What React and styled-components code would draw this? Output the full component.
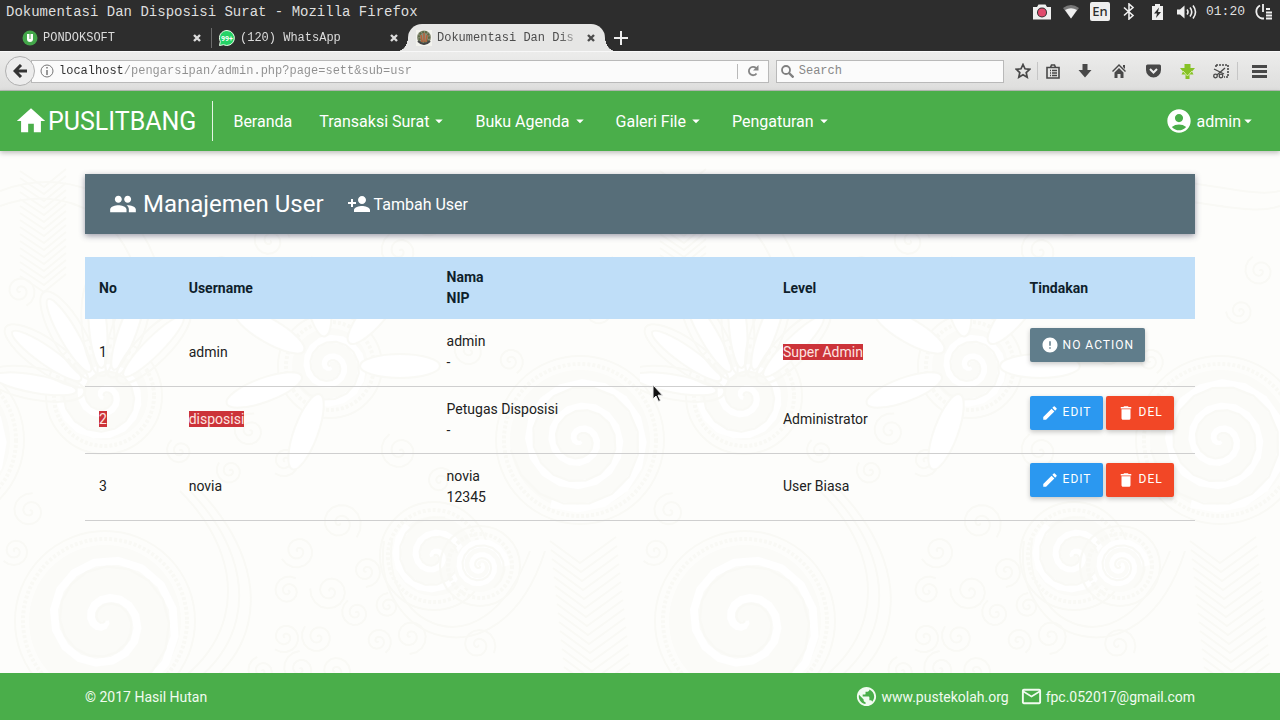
import styled, { createGlobalStyle } from "styled-components";
import {
  MdHome,
  MdArrowDropDown,
  MdAccountCircle,
  MdPeople,
  MdPersonAdd,
  MdError,
  MdEdit,
  MdDelete,
  MdPublic,
  MdMailOutline,
} from "react-icons/md";

const GlobalStyle = createGlobalStyle`
  * { box-sizing: border-box; }
  body {
    margin: 0;
    font-family: Roboto, sans-serif;
    font-size: 14px;
    color: #212121;
    background: #fdfdfb;
  }
  a { color: inherit; text-decoration: none; }
  button { font: inherit; color: inherit; border: 0; padding: 0; background: none; cursor: pointer; }
  svg { display: block; flex: none; }
`;

const mono = `"Liberation Mono", monospace`;

const Screen = styled.div`
  display: flex;
  flex-direction: column;
  min-height: 100vh;
`;

/* ---------- desktop + browser ---------- */

const TitleBar = styled.header`
  display: flex;
  align-items: center;
  justify-content: space-between;
  height: 23px;
  padding: 0 6px;
  background: #2d2d2d;
  color: #dfdfdf;
  font-family: ${mono};
  font-size: 14px;
`;

const Tray = styled.div`
  display: flex;
  align-items: center;
  gap: 9px;
`;

const TrayItem = styled.span`
  display: flex;
  justify-content: center;
  width: 20px;
`;

const Lang = styled.span`
  width: 20px;
  height: 19px;
  border-radius: 2px;
  background: #efefef;
  color: #2d2d2d;
  font: 500 13px/19px "Noto Sans", sans-serif;
  text-align: center;
`;

const Clock = styled.time`
  font-size: 13px;
`;

const TabBar = styled.nav`
  display: flex;
  align-items: flex-end;
  height: 28px;
  padding-left: 14px;
  background: #2d2d2d;
`;

const Tab = styled.div`
  position: relative;
  display: flex;
  align-items: center;
  gap: 5px;
  width: 197px;
  height: 27px;
  padding: 0 10px 0 8px;
  font-family: ${mono};
  font-size: 12px;
  color: ${(p) => (p.$active ? "#4c4c4c" : "#dcdcdc")};
  background: ${(p) => (p.$active ? "#e6e6e5" : "none")};
  border-radius: 14px 14px 0 0;

  &::before,
  &::after {
    content: "";
    display: ${(p) => (p.$active ? "block" : "none")};
    position: absolute;
    bottom: 0;
    width: 10px;
    height: 14px;
  }
  &::before {
    right: 100%;
    background: radial-gradient(10px 14px at 0 0, transparent 98%, #e6e6e5);
  }
  &::after {
    left: 100%;
    background: radial-gradient(10px 14px at 100% 0, transparent 98%, #e6e6e5);
  }
`;

const TabTitle = styled.span`
  flex: 1;
  overflow: hidden;
  white-space: nowrap;
  mask-image: linear-gradient(90deg, #000 84%, rgba(0, 0, 0, 0.1));
`;

const TabSplit = styled.span`
  width: 1px;
  height: 20px;
  margin: 0 -1px 3px 0;
  background: #6c6c6c;
`;

const NewTab = styled.button`
  display: flex;
  align-items: center;
  height: 27px;
  margin-left: 9px;
`;

const Toolbar = styled.div`
  display: flex;
  align-items: center;
  height: 40px;
  padding-left: 5px;
  background: linear-gradient(#ececeb, #dededd);
  border-top: 1px solid #f8f8f8;
  border-bottom: 1px solid #b7bdb6;
`;

const Back = styled.button`
  display: grid;
  place-items: center;
  width: 30px;
  height: 30px;
  border: 1px solid #b0b0b0;
  border-radius: 50%;
  background: #ececec;
  z-index: 1;
`;

const Field = styled.label`
  display: flex;
  align-items: center;
  flex: ${(p) => p.$grow} 1 0;
  height: 23px;
  margin-left: ${(p) => (p.$joined ? "-4px" : "7px")};
  padding-left: ${(p) => (p.$joined ? "8px" : "4px")};
  border: 1px solid #b9b9b9;
  background: #fbfbfb;
`;

const FieldInput = styled.input`
  flex: 1;
  min-width: 0;
  height: 21px;
  padding: 0 5px;
  border: 0;
  outline: 0;
  background: none;
  font-family: ${mono};
  font-size: 12px;
  color: #777;
  &::placeholder {
    color: #888;
    opacity: 1;
  }
`;

/* host name is darker than the path */
const UrlInput = styled(FieldInput)`
  padding: 0;
  margin-left: 5px;
  background: linear-gradient(90deg, #2e2e2e 9ch, #8f8f8f 9ch);
  -webkit-background-clip: text;
  background-clip: text;
  -webkit-text-fill-color: transparent;
`;

const Reload = styled.button`
  display: grid;
  place-items: center;
  width: 31px;
  height: 15px;
  border-left: 1px solid #b9b9b9;
`;

const Tools = styled.div`
  display: flex;
  margin-left: 4px;
`;

const Tool = styled.button`
  display: grid;
  place-items: center;
  width: ${(p) => p.$w || 34}px;
  height: 18px;
  border-right: ${(p) => (p.$split ? "1px solid #c6c6c6" : "0")};
  color: #484848;
`;

/* ---------- site ---------- */

const Navbar = styled.nav`
  display: flex;
  align-items: center;
  height: 60px;
  padding: 0 23px 0 14px;
  background: #4aae4a;
  color: #fff;
  font-size: 16px;
  box-shadow: 0 2px 5px rgba(0, 0, 0, 0.25);
  z-index: 1;
`;

const Brand = styled.a`
  display: flex;
  align-items: center;
  height: 40px;
  padding-right: 16px;
  margin-right: 7px;
  border-right: 1px solid #e5f5e5;
  font-size: 25px;
`;

const NavLink = styled.a`
  display: flex;
  align-items: center;
  padding: 0 14px 0 13px;
  svg {
    margin-left: 1px;
  }
`;

const Account = styled.a`
  display: flex;
  align-items: center;
  margin-left: auto;
  svg:first-child {
    margin-right: 4px;
  }
  svg:last-child {
    margin-left: -2px;
  }
`;

const Main = styled.main`
  position: relative;
  flex: 1;
  padding: 23px 85px;
  overflow: hidden;
`;

const Backdrop = styled.svg`
  position: absolute;
  top: 0;
  left: 0;
  width: 100%;
  height: 100%;
`;

const Heading = styled.div`
  position: relative;
  display: flex;
  align-items: center;
  height: 60px;
  margin-bottom: 23px;
  padding-left: 24px;
  background: #576e79;
  color: #fff;
  box-shadow: 0 2px 6px rgba(40, 40, 70, 0.45);
`;

const HeadTitle = styled.h1`
  display: flex;
  align-items: center;
  gap: 6px;
  margin: 0;
  font-size: 24px;
  font-weight: 400;
`;

const AddLink = styled.a`
  display: flex;
  align-items: center;
  gap: 3px;
  margin-left: 23px;
  font-size: 16px;
`;

const Table = styled.table`
  position: relative;
  width: 100%;
  table-layout: fixed;
  border-collapse: collapse;
  line-height: 21px;
`;

const HeadRow = styled.tr`
  height: 62px;
  background: #bfdef8;
`;

const Row = styled.tr`
  height: 67px;
  border-bottom: 1px solid #cfcfcf;
`;

const Th = styled.th`
  width: ${(p) => p.$w};
  padding: 0 14px;
  text-align: left;
  font-weight: 700;
  color: #0f1f2c;
`;

const Td = styled.td`
  padding: 0 14px;
`;

const ActionTd = styled(Td)`
  padding-top: 9px;
  vertical-align: top;
`;

const Actions = styled.div`
  display: flex;
  gap: 3px;
`;

const Selected = styled.mark`
  background: #cc3339;
  color: #fde3e0;
`;

const Btn = styled.button`
  display: flex;
  align-items: center;
  gap: 4px;
  height: 34px;
  padding: 0 11px;
  border-radius: 2px;
  background: ${(p) => p.$bg};
  color: #fff;
  font-size: 12px;
  letter-spacing: 1px;
  box-shadow: 0 2px 5px rgba(0, 0, 0, 0.22);
`;

const Footer = styled.footer`
  display: flex;
  align-items: center;
  height: 47px;
  padding: 0 85px;
  background: #4aae4a;
  color: #f1fbf0;
`;

const FootLink = styled.a`
  display: flex;
  align-items: center;
  gap: 3px;
  margin-left: ${(p) => (p.$first ? "auto" : "11px")};
`;

const Pointer = styled.svg`
  position: absolute;
  left: 652px;
  top: 384px;
  z-index: 2;
`;

/* ---------- drawings ---------- */

const spiral = (cx, cy, r, turns, start = 0) => {
  let d = "";
  const steps = turns * 16;
  for (let i = 0; i <= steps; i++) {
    const a = start + (i / 16) * Math.PI * 2;
    const q = (r * i) / steps;
    d += `${i ? "L" : "M"}${(cx + q * Math.cos(a)).toFixed(1)} ${(cy + q * Math.sin(a)).toFixed(1)}`;
  }
  return d;
};

const bigSpirals = [
  [105, 470, 76, 2, 1],
  [580, 289, 70, 3, 2],
  [-60, 289, 70, 3, 2],
  [434, 405, 40, 2, 4],
  [480, 415, 26, 2, 0],
  [104, 245, 44, 2, 3],
  [330, 215, 38, 2, 2],
];

const smallSpirals = [
  [298, 400, 18], [340, 372, 22], [366, 420, 16], [288, 440, 15], [330, 440, 20],
  [285, 486, 16], [318, 486, 17], [356, 462, 15], [378, 490, 14], [410, 485, 18],
  [262, 520, 15], [300, 518, 18], [335, 520, 18], [478, 494, 18], [388, 455, 13],
  [230, 60, 18], [270, 90, 20], [220, 120, 16], [520, 150, 20], [480, 130, 16],
  [250, 280, 18], [285, 310, 16], [230, 320, 14], [400, 300, 20], [440, 330, 15],
  [180, 300, 14], [470, 200, 18], [510, 210, 14], [400, 100, 20], [430, 70, 16],
  [20, 140, 16], [30, 360, 18], [15, 400, 15], [620, 120, 16], [600, 160, 14],
];

const petals = [-80, -55, -30, -5, 20, 45];

const Pattern = () => (
  <Backdrop aria-hidden="true">
    <defs>
      <pattern id="batik" width="640" height="560" patternUnits="userSpaceOnUse">
        <g fill="none" stroke="#f9f9f5" strokeWidth="2">
          {bigSpirals.map(([x, y, r, t, s]) => (
            <g key={`${x}-${y}`}>
              <circle cx={x} cy={y} r={r + 14} />
              <circle cx={x} cy={y} r={r + 6} strokeDasharray="3 2" strokeWidth="4" />
              <circle cx={x} cy={y} r={r} fill="#fbfbf8" stroke="none" />
              <path d={spiral(x, y, r, t, s)} stroke="#fff" strokeWidth="8" />
              <path d={spiral(x, y, r, t, s + 1)} />
            </g>
          ))}
          {smallSpirals.map(([x, y, r]) => (
            <path key={`${x}-${y}`} d={spiral(x, y, r, 2, x)} />
          ))}
          {petals.map((a) => (
            <g key={a}>
              <ellipse cx="104" cy="175" rx="16" ry="50" transform={`rotate(${a} 104 245)`} />
              <ellipse cx="104" cy="175" rx="9" ry="42" fill="#fff" transform={`rotate(${a} 104 245)`} />
              <ellipse cx="330" cy="145" rx="12" ry="40" fill="#fff" transform={`rotate(${a * 2} 330 215)`} />
            </g>
          ))}
          <path d="M180 340C260 420 240 520 120 560M190 340C272 425 250 525 135 560M200 340C285 430 260 530 150 560M392 390C380 470 480 530 530 400M384 390C370 490 500 540 545 400M0 40C80 10 150 60 160 130M0 55C70 30 130 70 140 140M440 40C520 10 600 50 640 40M440 55C520 30 600 70 640 55" />
          {[0, 1, 2, 3, 4, 5, 6, 7, 8, 9, 10, 11, 12, 13, 14, 15].map((i) => (
            <path key={i} d={`M${550 + i} ${390 + i * 9}l30 22l36 -26M20 ${20 + i * 7}l24 16l22 -18`} />
          ))}
        </g>
      </pattern>
    </defs>
    <rect width="100%" height="100%" fill="url(#batik)" />
  </Backdrop>
);

const Close = () => (
  <svg width="8" height="8" viewBox="0 0 8 8" stroke="currentColor" strokeWidth="2.4">
    <path d="M1 1l6 6M7 1L1 7" />
  </svg>
);

const Caret = () => <MdArrowDropDown size={18} />;

const columns = [
  { label: "No", w: "8%" },
  { label: "Username", w: "23%" },
  { label: "Nama", sub: "NIP", w: "30%" },
  { label: "Level", w: "22%" },
  { label: "Tindakan", w: "16%" },
];

const users = [
  { no: 1, username: "admin", nama: "admin", nip: "-", level: "Super Admin", marked: ["level"], locked: true },
  { no: 2, username: "disposisi", nama: "Petugas Disposisi", nip: "-", level: "Administrator", marked: ["no", "username"] },
  { no: 3, username: "novia", nama: "novia", nip: "12345", level: "User Biasa", marked: [] },
];

const menus = ["Transaksi Surat", "Buku Agenda", "Galeri File", "Pengaturan"];

const Value = ({ user, field }) =>
  user.marked.includes(field) ? <Selected>{user[field]}</Selected> : user[field];

const Desktop = () => (
  <TitleBar>
    <span>Dokumentasi Dan Disposisi Surat - Mozilla Firefox</span>
    <Tray>
      <TrayItem>
        <svg width="20" height="16" viewBox="0 0 20 16">
          <path d="M1 3h4l1.500-2.500h7L15 3h4v12.500H1z" fill="#efefef" />
          <circle cx="10" cy="8.500" r="5" fill="#2d2d2d" />
          <circle cx="10" cy="8.500" r="4" fill="#e04a6c" />
        </svg>
      </TrayItem>
      <TrayItem>
        <svg width="18" height="15" viewBox="0 0 18 15">
          <path d="M1 4Q9-2 17 4L9 14.500z" fill="#777" />
          <path d="M3 6Q9 2.500 15 6L9 14.500z" fill="#efefef" />
        </svg>
      </TrayItem>
      <Lang>En</Lang>
      <TrayItem>
        <svg width="12" height="17" viewBox="0 0 12 17" fill="none" stroke="#efefef" strokeWidth="1.600">
          <path d="M1 4.500l9 8-4 3.500V1l4 3.500-9 8" />
        </svg>
      </TrayItem>
      <TrayItem>
        <svg width="13" height="16" viewBox="0 0 13 16">
          <path d="M1 2h3V0h5v2h3v14H1z" fill="#efefef" />
          <path d="M8 3.500L3 9.500h3L5 14l5-6H7z" fill="#2d2d2d" />
        </svg>
      </TrayItem>
      <TrayItem>
        <svg width="20" height="14" viewBox="0 0 20 14">
          <path d="M0 4.500h3l4.500-4v13L3 9.500H0z" fill="#efefef" />
          <path d="M10 4.500q2 2.500 0 5M13 2.500q3.500 4.500 0 9M16 .5q5 6.500 0 13" fill="none" stroke="#efefef" strokeWidth="1.600" />
        </svg>
      </TrayItem>
      <Clock>01:20</Clock>
      <TrayItem>
        <svg width="18" height="16" viewBox="0 0 18 16" fill="none" stroke="#efefef" strokeWidth="1.800">
          <path d="M5 1.500a7 7 0 0 0 2 13h2M8 0v8M11 5h4M11 8.500h6M11 11.500h6M11 14.500h6" />
        </svg>
      </TrayItem>
    </Tray>
  </TitleBar>
);

const Tabs = () => (
  <TabBar>
    <Tab>
      <svg width="16" height="16" viewBox="0 0 16 16">
        <circle cx="8" cy="8" r="7.500" fill="#43a64a" />
        <path d="M5 4h6v5a3 3 0 0 1-6 0z" fill="#fff" />
        <path d="M8 4v5" stroke="#43a64a" />
      </svg>
      <TabTitle>PONDOKSOFT</TabTitle>
      <button aria-label="Tutup tab"><Close /></button>
    </Tab>
    <TabSplit />
    <Tab>
      <svg width="16" height="16" viewBox="0 0 16 16">
        <path d="M8 .500a7.500 7.500 0 1 1-3.500 14.200L.5 15.500l.8-4A7.500 7.500 0 0 1 8 .500z" fill="#25d366" stroke="#e8ffe8" />
        <text x="8" y="11" fontSize="7" fontWeight="700" fontFamily="Roboto" fill="#fff" textAnchor="middle">99+</text>
      </svg>
      <TabTitle>(120) WhatsApp</TabTitle>
      <button aria-label="Tutup tab"><Close /></button>
    </Tab>
    <Tab $active>
      <svg width="16" height="16" viewBox="0 0 16 16">
        <path d="M0 0h16v16H0z" fill="#f3f3ee" />
        <circle cx="8" cy="7.500" r="7" fill="#8b8f7a" />
        <circle cx="8" cy="7" r="5" fill="none" stroke="#5d6a45" strokeWidth="2" strokeDasharray="2 1" />
        <path d="M8 3v9M5 5l1 7M11 5l-1 7" stroke="#b5603a" strokeWidth="1.500" />
        <path d="M2 11q6 6 12 0" fill="none" stroke="#444" strokeWidth="2" />
      </svg>
      <TabTitle>Dokumentasi Dan Dis</TabTitle>
      <button aria-label="Tutup tab"><Close /></button>
    </Tab>
    <NewTab aria-label="Tab baru">
      <svg width="14" height="14" viewBox="0 0 14 14" stroke="#eee" strokeWidth="2">
        <path d="M7 0v14M0 7h14" />
      </svg>
    </NewTab>
  </TabBar>
);

const BrowserBar = () => (
  <Toolbar>
    <Back aria-label="Kembali">
      <svg width="15" height="14" viewBox="0 0 15 14" fill="none" stroke="#333" strokeWidth="3">
        <path d="M14 7H3M8 1L2 7l6 6" />
      </svg>
    </Back>
    <Field $grow={740} $joined>
      <svg width="14" height="14" viewBox="0 0 14 14" fill="none" stroke="#777">
        <circle cx="7" cy="7" r="6" />
        <path d="M7 3v1.500M7 6v5" strokeWidth="1.500" />
      </svg>
      <UrlInput aria-label="Alamat" defaultValue="localhost/pengarsipan/admin.php?page=sett&sub=usr" />
      <Reload aria-label="Muat ulang">
        <svg width="12" height="12" viewBox="0 0 12 12" fill="none" stroke="#858585" strokeWidth="1.800">
          <path d="M9.500 8.500A4.200 4.200 0 1 1 9 3" />
          <path d="M11.500 0v5.500H6z" fill="#858585" stroke="none" />
        </svg>
      </Reload>
    </Field>
    <Field $grow={226}>
      <svg width="13" height="13" viewBox="0 0 13 13" fill="none" stroke="#808080" strokeWidth="1.800">
        <circle cx="5" cy="5" r="4" />
        <path d="M8 8l4.500 4.500" strokeWidth="2.400" />
      </svg>
      <FieldInput aria-label="Cari" placeholder="Search" />
    </Field>
    <Tools>
      <Tool $w={30} $split aria-label="Markah">
        <svg width="16" height="16" viewBox="0 0 16 16" fill="none" stroke="currentColor" strokeWidth="1.700">
          <path d="M8 1.500l2 4.300 4.700.5-3.500 3.200 1 4.700L8 11.800l-4.200 2.400 1-4.700L1.300 6.300l4.700-.5z" />
        </svg>
      </Tool>
      <Tool $w={30} aria-label="Daftar markah">
        <svg width="14" height="15" viewBox="0 0 14 15" fill="none" stroke="currentColor" strokeWidth="1.600">
          <path d="M1 3.500h12V14H1zM4 6.500h1M6 6.500h5M4 9h1M6 9h5M4 11.500h1M6 11.500h5" />
          <path d="M4.500 3.500l1-2.500h3l1 2.500" />
        </svg>
      </Tool>
      <Tool aria-label="Unduhan">
        <svg width="14" height="14" viewBox="0 0 14 14" fill="currentColor">
          <path d="M4.500 0h5v6h4L7 13.500.500 6h4z" />
        </svg>
      </Tool>
      <Tool aria-label="Beranda peramban">
        <svg width="14" height="14" viewBox="0 0 14 14" fill="currentColor">
          <path d="M7 0l7 7-1 1-6-6-6 6-1-1zM11 1h2v4l-2-2zM7 4l4.500 4.500V14h-3v-4h-3v4h-3V8.500z" />
        </svg>
      </Tool>
      <Tool aria-label="Pocket">
        <svg width="15" height="14" viewBox="0 0 15 14">
          <path d="M1.500.500h12a1.500 1.500 0 0 1 1.500 1.500v4a7.500 7.500 0 0 1-15 0V2A1.500 1.500 0 0 1 1.500.500z" fill="#484848" />
          <path d="M4 5l3.500 3.500L11 5" fill="none" stroke="#eee" strokeWidth="2" />
        </svg>
      </Tool>
      <Tool aria-label="Pengunduh">
        <svg width="15" height="15" viewBox="0 0 15 15" fill="#86c226">
          <path d="M4.500 0h6v4H15l-3 3.500 1.500 3H9.500V15h-4v-4.500h-4l1.500-3L0 4h4.500z" />
          <path d="M3 7l4.500 5L12 7" fill="none" stroke="#d9f0a8" />
        </svg>
      </Tool>
      <Tool $split aria-label="Tangkapan layar">
        <svg width="16" height="15" viewBox="0 0 16 15" fill="none" stroke="currentColor" strokeWidth="1.300">
          <path d="M3 1h12v12h-4M3 1v3" strokeWidth="1.600" strokeDasharray="2 1" />
          <path d="M1 5l10 5M12 4L4 11" />
          <circle cx="2.500" cy="12" r="1.800" />
          <circle cx="8" cy="12" r="1.800" />
        </svg>
      </Tool>
      <Tool $w={42} aria-label="Menu">
        <svg width="15" height="13" viewBox="0 0 15 13" fill="currentColor">
          <path d="M0 0h15v3H0zM0 5h15v3H0zM0 10h15v3H0z" />
        </svg>
      </Tool>
    </Tools>
  </Toolbar>
);

export const UserTable = () => (
  <Table>
    <thead>
      <HeadRow>
        {columns.map((c) => (
          <Th key={c.label} $w={c.w}>
            {c.label}
            {c.sub && <br />}
            {c.sub}
          </Th>
        ))}
      </HeadRow>
    </thead>
    <tbody>
      {users.map((u) => (
        <Row key={u.no}>
          <Td><Value user={u} field="no" /></Td>
          <Td><Value user={u} field="username" /></Td>
          <Td>{u.nama}<br />{u.nip}</Td>
          <Td><Value user={u} field="level" /></Td>
          <ActionTd>
            <Actions>
              {u.locked ? (
                <Btn $bg="#607d8b"><MdError size={18} />NO ACTION</Btn>
              ) : (
                <>
                  <Btn $bg="#2b98f0"><MdEdit size={18} />EDIT</Btn>
                  <Btn $bg="#f24726"><MdDelete size={18} />DEL</Btn>
                </>
              )}
            </Actions>
          </ActionTd>
        </Row>
      ))}
    </tbody>
  </Table>
);

const App = () => {
  return (
    <Screen>
      <GlobalStyle />
      <Desktop />
      <Tabs />
      <BrowserBar />

      <Navbar>
        <Brand href="#"><MdHome size={34} />PUSLITBANG</Brand>
        <NavLink href="#">Beranda</NavLink>
        {menus.map((m) => (
          <NavLink href="#" key={m}>{m}<Caret /></NavLink>
        ))}
        <Account href="#"><MdAccountCircle size={28} />admin<Caret /></Account>
      </Navbar>

      <Main>
        <Pattern />
        <Heading>
          <HeadTitle><MdPeople size={28} />Manajemen User</HeadTitle>
          <AddLink href="#"><MdPersonAdd size={24} />Tambah User</AddLink>
        </Heading>
        <UserTable />
      </Main>

      <Footer>
        <span>© 2017 Hasil Hutan</span>
        <FootLink href="#" $first><MdPublic size={23} />www.pustekolah.org</FootLink>
        <FootLink href="#"><MdMailOutline size={23} />fpc.052017@gmail.com</FootLink>
      </Footer>

      <Pointer width="12" height="19" viewBox="0 0 12 19">
        <path d="M1 1v14l3-3 2.500 5.500 2-1L6 11.200h4.500z" fill="#111" stroke="#eee" />
      </Pointer>
    </Screen>
  );
};

export default App;
